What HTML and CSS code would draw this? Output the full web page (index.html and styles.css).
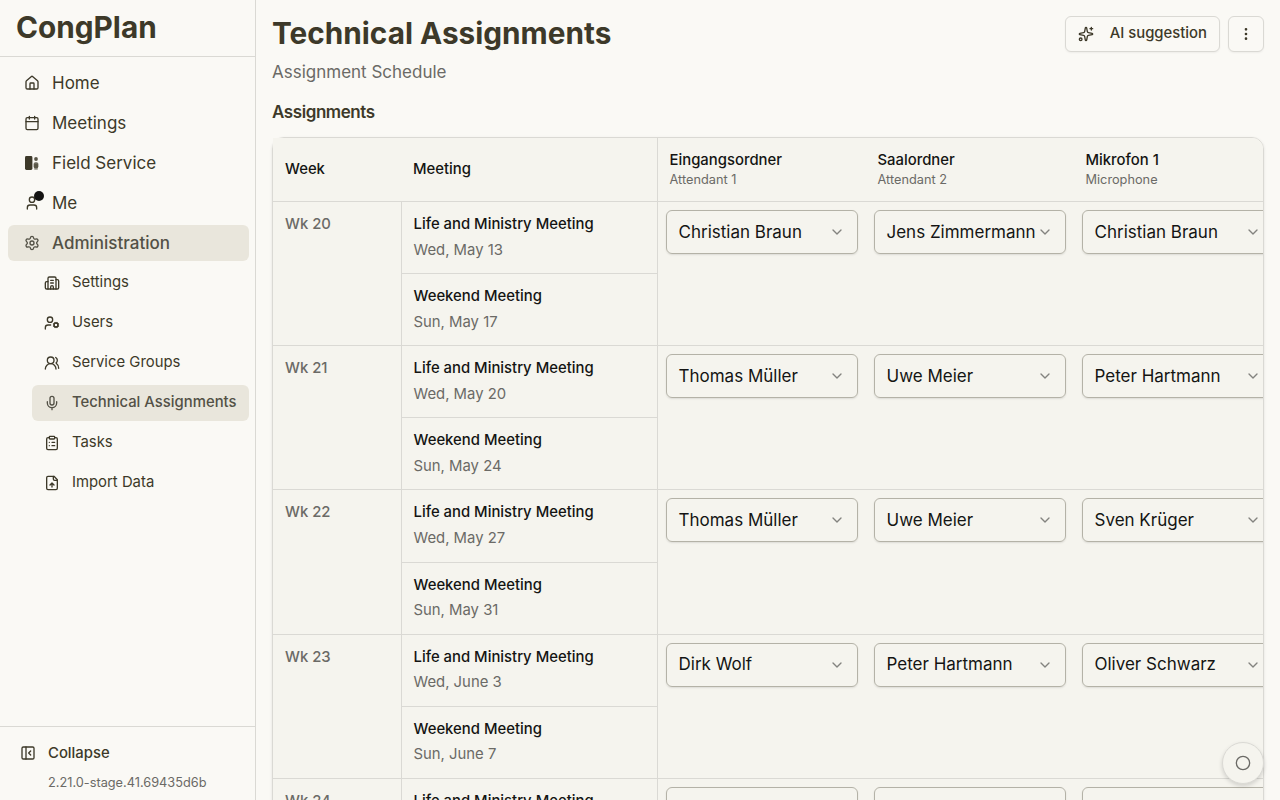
FILE: index.html
```
<!DOCTYPE html>
<html lang="en">
  <head>
    <meta charset="UTF-8" />
    <meta name="viewport" content="width=device-width, initial-scale=1.0" />
    <title>CongPlan - Technical Assignments</title>
    <link rel="stylesheet" href="styles.css">
  </head>

  <body>
    <aside class="sidebar">
      <div class="brand">CongPlan</div>

      <nav class="menu">
        <a class="item">
          <svg class="icon" viewBox="0 0 24 24"><path d="M15 21v-8a1 1 0 0 0-1-1h-4a1 1 0 0 0-1 1v8" /><path d="M3 10a2 2 0 0 1 .709-1.528l7-5.999a2 2 0 0 1 2.582 0l7 5.999A2 2 0 0 1 21 10v9a2 2 0 0 1-2 2H5a2 2 0 0 1-2-2z" /></svg>
          <span class="label">Home</span>
        </a>
        <a class="item">
          <svg class="icon" viewBox="0 0 24 24"><path d="M8 2v4M16 2v4M3 10h18" /><rect width="18" height="18" x="3" y="4" rx="2" /></svg>
          <span class="label">Meetings</span>
        </a>
        <a class="item">
          <svg class="icon solid" viewBox="0 0 16 16"><rect x="1" y="1" width="7.4" height="14" rx="1.4" /><circle cx="12" cy="4" r="1.9" opacity=".85" /><rect x="9.6" y="7.2" width="4.8" height="6.2" rx="1.8" opacity=".75" /><rect x="10" y="9" width="4" height="6" rx="1" opacity=".4" /></svg>
          <span class="label">Field Service</span>
        </a>
        <a class="item">
          <span class="icon-wrap">
            <svg class="icon" viewBox="0 0 24 24"><path d="M19 21v-2a4 4 0 0 0-4-4H9a4 4 0 0 0-4 4v2" /><circle cx="12" cy="7" r="4" /></svg>
            <span class="dot"></span>
          </span>
          <span class="label">Me</span>
        </a>
        <a class="item active">
          <svg class="icon" viewBox="0 0 24 24"><path d="M9.671 4.136a2.34 2.34 0 0 1 4.659 0 2.34 2.34 0 0 0 3.319 1.915 2.34 2.34 0 0 1 2.33 4.033 2.34 2.34 0 0 0 0 3.831 2.34 2.34 0 0 1-2.33 4.033 2.34 2.34 0 0 0-3.319 1.915 2.34 2.34 0 0 1-4.659 0 2.34 2.34 0 0 0-3.32-1.915 2.34 2.34 0 0 1-2.33-4.033 2.34 2.34 0 0 0 0-3.831A2.34 2.34 0 0 1 6.35 6.051a2.34 2.34 0 0 0 3.319-1.915" /><circle cx="12" cy="12" r="3" /></svg>
          <span class="label">Administration</span>
        </a>

        <div class="submenu">
          <a class="item">
            <svg class="icon" viewBox="0 0 24 24"><path d="M10 12h4M10 8h4M14 21v-3a2 2 0 0 0-4 0v3" /><path d="M6 10H4a2 2 0 0 0-2 2v7a2 2 0 0 0 2 2h16a2 2 0 0 0 2-2V9a2 2 0 0 0-2-2h-2" /><path d="M6 21V5a2 2 0 0 1 2-2h8a2 2 0 0 1 2 2v16" /></svg>
            <span>Settings</span>
          </a>
          <a class="item">
            <svg class="icon" viewBox="0 0 24 24"><path d="M10 15H6a4 4 0 0 0-4 4v2" /><circle cx="9" cy="7" r="4" /><circle cx="18" cy="15" r="3" /><path d="m14.305 16.530.923-.382M15.228 13.852l-.923-.383M16.852 12.228l-.383-.923M16.852 17.772l-.383.924M19.148 12.228l.383-.923M19.530 18.696l-.382-.924M20.772 13.852l.924-.383M20.772 16.148l.924.383" /></svg>
            <span>Users</span>
          </a>
          <a class="item">
            <svg class="icon" viewBox="0 0 24 24"><path d="M18 21a8 8 0 0 0-16 0" /><circle cx="10" cy="8" r="5" /><path d="M22 20c0-3.370-2-6.500-4-8a5 5 0 0 0-.45-8.300" /></svg>
            <span>Service Groups</span>
          </a>
          <a class="item active">
            <svg class="icon" viewBox="0 0 24 24"><path d="M12 19v3M19 10v2a7 7 0 0 1-14 0v-2" /><rect x="9" y="2" width="6" height="13" rx="3" /></svg>
            <span>Technical Assignments</span>
          </a>
          <a class="item">
            <svg class="icon" viewBox="0 0 24 24"><rect width="8" height="4" x="8" y="2" rx="1" /><path d="M16 4h2a2 2 0 0 1 2 2v14a2 2 0 0 1-2 2H6a2 2 0 0 1-2-2V6a2 2 0 0 1 2-2h2M12 11h4M12 16h4M8 11h.01M8 16h.01" /></svg>
            <span>Tasks</span>
          </a>
          <a class="item">
            <svg class="icon" viewBox="0 0 24 24"><path d="M15 2H6a2 2 0 0 0-2 2v16a2 2 0 0 0 2 2h12a2 2 0 0 0 2-2V7Z" /><path d="M14 2v4a2 2 0 0 0 2 2h4M12 12v6M15 15l-3-3-3 3" /></svg>
            <span>Import Data</span>
          </a>
        </div>
      </nav>

      <div class="sidebar-footer">
        <a class="collapse">
          <svg class="icon" viewBox="0 0 24 24"><rect width="18" height="18" x="3" y="3" rx="2" /><path d="M9 3v18M16 15l-3-3 3-3" /></svg>
          <span>Collapse</span>
        </a>
        <div class="version">2.21.0-stage.41.69435d6b</div>
      </div>
    </aside>

    <main class="content">
      <header class="page-header">
        <div>
          <h1>Technical Assignments</h1>
          <p class="subtitle">Assignment Schedule</p>
        </div>
        <div class="actions">
          <button class="btn">
            <svg class="icon" viewBox="0 0 24 24"><path d="M11.017 2.814a1 1 0 0 1 1.966 0l1.051 5.558a2 2 0 0 0 1.594 1.594l5.558 1.051a1 1 0 0 1 0 1.966l-5.558 1.051a2 2 0 0 0-1.594 1.594l-1.051 5.558a1 1 0 0 1-1.966 0l-1.051-5.558a2 2 0 0 0-1.594-1.594l-5.558-1.051a1 1 0 0 1 0-1.966l5.558-1.051a2 2 0 0 0 1.594-1.594zM20 2v4M22 4h-4" /><circle cx="4" cy="20" r="2" /></svg>
            <span>AI suggestion</span>
          </button>
          <button class="btn btn-icon">
            <svg class="icon" viewBox="0 0 24 24"><circle cx="12" cy="12" r="1" /><circle cx="12" cy="5" r="1" /><circle cx="12" cy="19" r="1" /></svg>
          </button>
        </div>
      </header>

      <h2>Assignments</h2>

      <div class="schedule">
        <div class="scroller">
          <div class="row head">
            <div class="head-cell">Week</div>
            <div class="head-cell meeting-head">Meeting</div>
            <div class="head-cell role">Eingangsordner<small>Attendant 1</small></div>
            <div class="head-cell role">Saalordner<small>Attendant 2</small></div>
            <div class="head-cell role">Mikrofon 1<small>Microphone</small></div>
          </div>
          <div id="weeks"></div>
        </div>
      </div>
    </main>

    <button class="fab">
      <svg class="icon" viewBox="0 0 24 24"><circle cx="12" cy="12" r="10" /></svg>
    </button>

    <script>
      const weeks = [
        { wk: 20, mid: "Wed, May 13", end: "Sun, May 17", names: ["Christian Braun", "Jens Zimmermann", "Christian Braun"] },
        { wk: 21, mid: "Wed, May 20", end: "Sun, May 24", names: ["Thomas Müller", "Uwe Meier", "Peter Hartmann"] },
        { wk: 22, mid: "Wed, May 27", end: "Sun, May 31", names: ["Thomas Müller", "Uwe Meier", "Sven Krüger"] },
        { wk: 23, mid: "Wed, June 3", end: "Sun, June 7", names: ["Dirk Wolf", "Peter Hartmann", "Oliver Schwarz"] },
        { wk: 24, mid: "Wed, June 10", end: "Sun, June 14", names: ["Jens Zimmermann", "Dirk Wolf", "Uwe Meier"] },
      ];

      const select = (name) => `
        <div class="slot">
          <button class="select">
            <span class="label">${name}</span>
            <svg class="icon" viewBox="0 0 24 24"><path d="m6 9 6 6 6-6" /></svg>
          </button>
        </div>`;

      document.querySelector("#weeks").innerHTML = weeks
        .map((w) => `
        <div class="row week">
          <div class="week-no">Wk ${w.wk}</div>
          <div class="meetings">
            <div class="meeting"><strong>Life and Ministry Meeting</strong><span>${w.mid}</span></div>
            <div class="meeting"><strong>Weekend Meeting</strong><span>${w.end}</span></div>
          </div>
          ${w.names.map(select).join("")}
        </div>`)
        .join("");
    </script>
  </body>
</html>
```
FILE: styles.css
```
* {
  box-sizing: border-box;
}

body {
  margin: 0;
  height: 100vh;
  display: flex;
  overflow: hidden;
  font-family: Inter, "Liberation Sans", sans-serif;
  font-size: 17px;
  line-height: 1.5;
  color: #3d3929;
  background: #faf9f5;
}

button {
  font: inherit;
  color: inherit;
}

.icon {
  width: 16px;
  height: 16px;
  flex-shrink: 0;
  fill: none;
  stroke: currentColor;
  stroke-width: 2;
  stroke-linecap: round;
  stroke-linejoin: round;
}

.icon.solid {
  fill: currentColor;
  stroke: none;
}

.label {
  padding-top: 1px;
}

/* Sidebar */
.sidebar {
  width: 256px;
  flex-shrink: 0;
  display: flex;
  flex-direction: column;
  border-right: 1px solid #dad9d4;
}

.brand {
  height: 57px;
  padding: 5px 16px 0;
  font-size: 29.75px;
  font-weight: 700;
  border-bottom: 1px solid #dad9d4;
}

.menu {
  flex: 1;
  display: flex;
  flex-direction: column;
  gap: 4px;
  padding: 8px 6px 0 8px;
}

.item {
  height: 36px;
  display: flex;
  align-items: center;
  gap: 12px;
  padding: 0 16px;
  border-radius: 6px;
}

.item.active {
  background: #e9e6dc;
  color: #535146;
  font-weight: 500;
}

.icon-wrap {
  position: relative;
  display: flex;
}

.dot {
  position: absolute;
  top: -4px;
  right: -4px;
  width: 10px;
  height: 10px;
  border-radius: 50%;
  background: #141413;
}

.submenu {
  display: flex;
  flex-direction: column;
  gap: 4px;
  margin-left: 24px;
  font-size: 14.875px;
}

.submenu .item {
  padding: 0 12px;
}

.submenu .item span {
  margin-top: -2px;
  white-space: nowrap;
}

.sidebar-footer {
  height: 74px;
  padding: 15px 20px 0;
  border-top: 1px solid #dad9d4;
}

.collapse {
  display: flex;
  align-items: center;
  gap: 12px;
  font-size: 14.875px;
  font-weight: 500;
}

.version {
  margin: 9px 0 0 28px;
  font-size: 12.75px;
  color: #6b6a66;
}

/* Page */
.content {
  flex: 1;
  min-width: 0;
  padding: 16px 16px 0;
}

.page-header {
  display: flex;
  justify-content: space-between;
  align-items: flex-start;
}

h1 {
  margin: 0;
  font-size: 29.75px;
  line-height: 34px;
}

.subtitle {
  margin: 9px 0 0;
  line-height: 26px;
  color: #6b6a66;
}

h2 {
  margin: 14px 0 12px;
  font-size: 17px;
  font-weight: 600;
  line-height: 26px;
  letter-spacing: -0.425px;
}

.actions {
  display: flex;
  gap: 8px;
}

.btn {
  height: 36px;
  display: flex;
  align-items: center;
  gap: 16px;
  padding: 0 12px;
  font-size: 14.875px;
  font-weight: 500;
  background: #faf9f5;
  border: 1px solid #dad9d4;
  border-radius: 6px;
  box-shadow: 0 1px 2px rgba(0, 0, 0, 0.05);
}

.btn span {
  margin-top: -2px;
}

.btn-icon {
  width: 36px;
  padding: 0;
  justify-content: center;
}

/* Schedule */
.schedule {
  border: 1px solid #dad9d4;
  border-radius: 12px 12px 0 0;
  box-shadow: 0 1px 3px rgba(0, 0, 0, 0.1);
}

.scroller {
  height: 700px;
  overflow: hidden;
  background: #f5f4ee;
  border-radius: 0 11px 0 0;
}

.row {
  display: grid;
  grid-template-columns: 128px 257px repeat(3, 208px);
  border-bottom: 1px solid #dad9d4;
  font-size: 14.875px;
}

.head {
  height: 64px;
}

.head-cell {
  display: flex;
  flex-direction: column;
  justify-content: center;
  padding: 0 12px 2px;
  font-weight: 500;
  line-height: 22px;
  color: #141413;
}

.head-cell.role {
  padding-left: 11.5px;
}

.head-cell small {
  font-size: 12.75px;
  font-weight: 400;
  line-height: 18px;
  color: #6b6a66;
}

.meeting-head {
  border-right: 1px solid #dad9d4;
}

.week {
  height: 144.24px;
}

.week-no {
  padding: 11px 12px;
  font-weight: 500;
  color: #6b6a66;
}

.meetings {
  border: 1px solid #dad9d4;
  border-width: 0 1px;
}

.meeting {
  height: 72.12px;
  padding: 10px 11.5px 0;
  line-height: 25.5px;
}

.meeting:first-child {
  border-bottom: 1px solid #dad9d4;
}

.meeting strong,
.meeting span {
  display: block;
}

.meeting strong {
  font-weight: 500;
  color: #141413;
}

.meeting span {
  color: #6b6a66;
}

.slot {
  padding: 8px;
}

.select {
  width: 192px;
  height: 44px;
  display: flex;
  align-items: center;
  justify-content: space-between;
  padding: 0 12px 0 11.5px;
  font-size: 17px;
  white-space: nowrap;
  color: #141413;
  background: none;
  border: 1px solid #b4b2a7;
  border-radius: 6px;
  box-shadow: 0 1px 2px rgba(0, 0, 0, 0.1);
}

.select .icon {
  opacity: 0.5;
}

/* Floating button */
.fab {
  position: fixed;
  right: 16px;
  bottom: 16px;
  width: 42px;
  height: 42px;
  display: flex;
  align-items: center;
  justify-content: center;
  padding: 0;
  color: #6b6a66;
  background: #f5f4ee;
  border: 1px solid #dad9d4;
  border-radius: 50%;
  box-shadow: 0 2px 4px rgba(0, 0, 0, 0.15);
}
```
